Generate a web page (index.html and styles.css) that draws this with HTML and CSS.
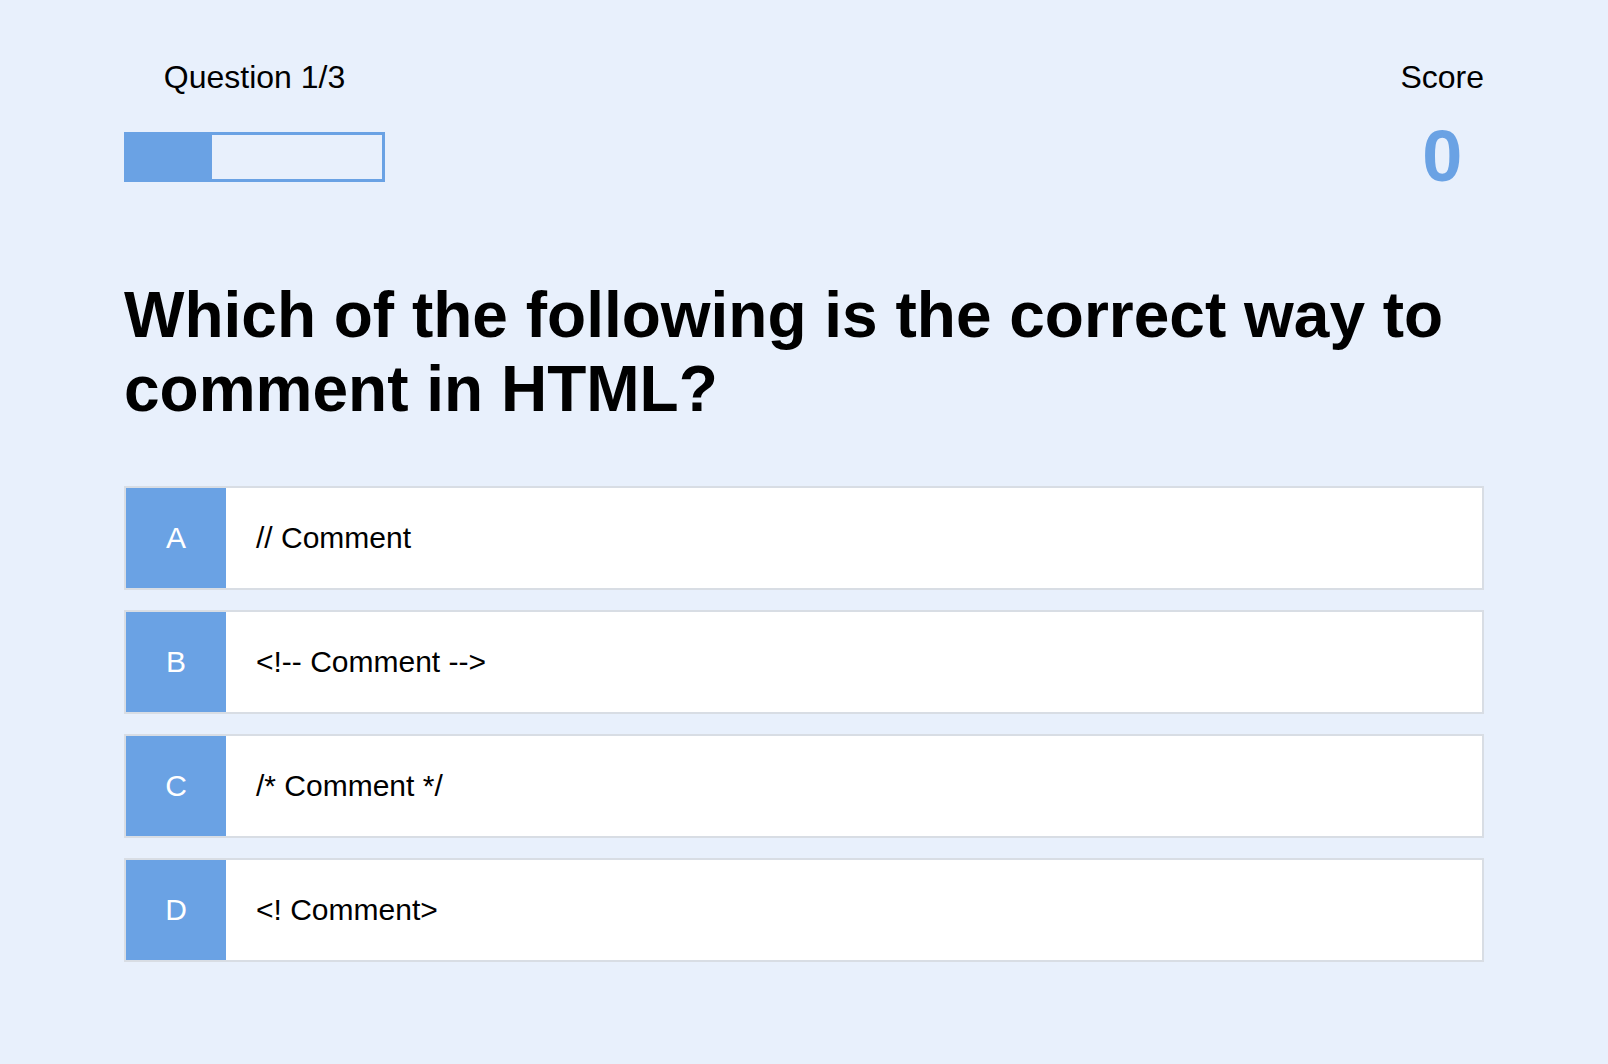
FILE: index.html
```html
<!DOCTYPE html>
<html lang="en">
<head>
<meta charset="utf-8">
<title>Quiz</title>
<link rel="stylesheet" href="styles.css">
</head>
<body>
<main class="quiz">
  <header class="hud">
    <div class="hud-progress">
      <p class="hud-label">Question 1/3</p>
      <div class="bar"><div class="bar-fill" style="width: 33.333%"></div></div>
    </div>
    <div class="hud-score">
      <p class="hud-label">Score</p>
      <p class="score-value">0</p>
    </div>
  </header>

  <h1 class="question">Which of the following is the correct way to comment in HTML?</h1>

  <div class="options">
    <div class="option"><span class="option-letter">A</span><span class="option-text">// Comment</span></div>
    <div class="option"><span class="option-letter">B</span><span class="option-text">&lt;!-- Comment --&gt;</span></div>
    <div class="option"><span class="option-letter">C</span><span class="option-text">/* Comment */</span></div>
    <div class="option"><span class="option-letter">D</span><span class="option-text">&lt;! Comment&gt;</span></div>
  </div>
</main>
</body>
</html>
```
FILE: styles.css
```css
* { box-sizing: border-box; }

html, body {
  margin: 0;
  padding: 0;
}

body {
  background: #e8f0fc;
  font-family: "Liberation Sans", Arial, sans-serif;
  color: #000;
  min-height: 1064px;
}

.quiz {
  width: 1360px;
  margin: 0 auto;
  padding-top: 59px;
}

.hud {
  display: flex;
  justify-content: space-between;
  align-items: flex-start;
}

.hud-progress {
  width: 261px;
  text-align: center;
}

.hud-label {
  margin: 0;
  font-size: 32px;
}

.bar {
  margin-top: 36px;
  height: 50px;
  border: 3px solid #6aa2e4;
  display: flex;
}

.bar-fill {
  background: #6aa2e4;
  height: 100%;
}

.hud-score {
  text-align: center;
}

.score-value {
  margin: 19px 0 0;
  font-size: 72px;
  font-weight: 700;
  color: #6aa2e4;
}

.question {
  margin: 81px 0 0;
  font-size: 64px;
  font-weight: 700;
  line-height: normal;
}

.options {
  margin-top: 60px;
  display: flex;
  flex-direction: column;
  gap: 20px;
}

.option {
  display: flex;
  align-items: stretch;
  height: 104px;
  border: 2px solid #d8dde4;
  background: #fff;
}

.option-letter {
  width: 100px;
  flex: none;
  display: flex;
  align-items: center;
  justify-content: center;
  background: #6aa2e4;
  color: #fff;
  font-size: 30px;
}

.option-text {
  display: flex;
  align-items: center;
  padding-left: 30px;
  font-size: 30px;
}
```
